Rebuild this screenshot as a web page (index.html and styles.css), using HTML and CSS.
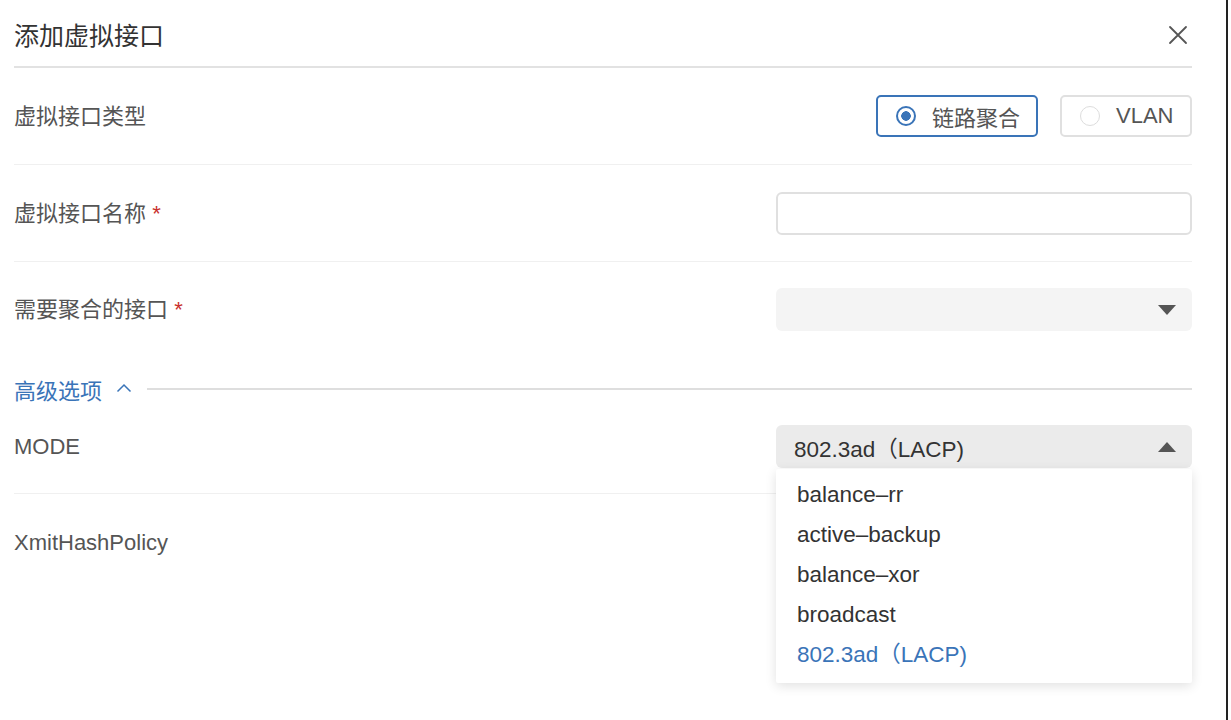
FILE: index.html
```html
<!DOCTYPE html>
<html lang="zh-CN">
<head>
<meta charset="utf-8">
<title>添加虚拟接口</title>
<link rel="stylesheet" href="styles.css">
</head>
<body>
<div class="frame">
  <div class="dialog">
    <div class="header">
      <h1 class="title">添加虚拟接口</h1>
      <button class="close" aria-label="关闭">
        <svg width="20" height="20" viewBox="0 0 20 20"><path d="M2 2 L18 18 M18 2 L2 18" stroke="#555" stroke-width="1.8" fill="none" stroke-linecap="round"/></svg>
      </button>
    </div>

    <div class="row">
      <div class="label">虚拟接口类型</div>
      <div class="radios">
        <label class="radio checked"><span class="dot"></span><span>链路聚合</span></label>
        <label class="radio vlan"><span class="dot"></span><span>VLAN</span></label>
      </div>
    </div>

    <div class="row">
      <div class="label">虚拟接口名称 <span class="req">*</span></div>
      <div class="control"><div class="input"></div></div>
    </div>

    <div class="row last">
      <div class="label high">需要聚合的接口 <span class="req">*</span></div>
      <div class="control raise">
        <div class="select">
          <span class="value"></span>
          <svg class="caret" width="18" height="10" viewBox="0 0 18 10"><path d="M0 0 H18 L9 10 Z" fill="#555"/></svg>
        </div>
      </div>
    </div>

    <div class="adv">
      <span class="adv-title">高级选项</span>
      <svg class="chev" width="16" height="10" viewBox="0 0 16 10"><path d="M1.5 8.5 L8 2 L14.5 8.5" stroke="#3a74b8" stroke-width="1.5" fill="none"/></svg>
      <span class="adv-line"></span>
    </div>

    <div class="row mode">
      <div class="label">MODE</div>
      <div class="control">
        <div class="select open">
          <span class="value">802.3ad（LACP)</span>
          <svg class="caret" width="18" height="10" viewBox="0 0 18 10"><path d="M0 10 H18 L9 0 Z" fill="#555"/></svg>
        </div>
        <ul class="menu">
          <li>balance–rr</li>
          <li>active–backup</li>
          <li>balance–xor</li>
          <li>broadcast</li>
          <li class="selected">802.3ad（LACP)</li>
        </ul>
      </div>
    </div>

    <div class="row last">
      <div class="label flat">XmitHashPolicy</div>
      <div class="control"></div>
    </div>
  </div>
</div>
</body>
</html>
```

FILE: styles.css
```css
* { box-sizing: border-box; }
html, body { margin: 0; padding: 0; background: #fff; }
body {
  font-family: "Liberation Sans", "Noto Sans CJK SC", sans-serif;
  color: #333;
}
.frame {
  width: 1228px;
  height: 720px;
  border-right: 2px solid #222;
  overflow: hidden;
}
.dialog {
  padding: 0 34px 0 14px;
}
.header {
  height: 68px;
  display: flex;
  align-items: center;
  justify-content: space-between;
  border-bottom: 2px solid #e2e2e2;
}
.title {
  margin: 0;
  font-size: 25px;
  font-weight: normal;
  color: #333;
  position: relative;
  top: 1px;
}
.close {
  border: 0;
  background: none;
  padding: 0;
  margin-right: 4px;
  width: 20px;
  height: 20px;
  position: relative;
  top: 2px;
}
.row {
  height: 97px;
  display: flex;
  align-items: center;
  justify-content: space-between;
  border-bottom: 1px solid #f0f0f0;
}
.row.last { border-bottom: 0; }
.label {
  font-size: 22px;
  color: #555;
  padding-bottom: 4px;
}
.label.high { padding-bottom: 8px; }
.label.flat { padding-bottom: 0; }
.req { color: #c9302c; }
.control {
  width: 416px;
  position: relative;
}
.control.raise { top: -1px; }
.radios {
  display: flex;
  gap: 22px;
}
.radio {
  height: 42px;
  width: 162px;
  display: flex;
  align-items: center;
  gap: 16px;
  padding-left: 18px;
  border: 2px solid #e0e0e0;
  border-radius: 5px;
  font-size: 22px;
  color: #555;
}
.radio.vlan { width: 132px; }
.radio.checked { border-color: #3a74b8; }
.dot {
  width: 20px;
  height: 20px;
  border-radius: 50%;
  border: 1.5px solid #ddd;
  background: #fff;
}
.radio.checked .dot {
  border: 2px solid #3a74b8;
  background: radial-gradient(circle, #3a74b8 0 4.5px, #fff 5px);
}
.input {
  height: 43px;
  border: 2px solid #e0e0e0;
  border-radius: 6px;
  background: #fff;
}
.select {
  height: 43px;
  border-radius: 6px;
  background: #f4f4f4;
  display: flex;
  align-items: center;
  justify-content: space-between;
  padding: 0 16px 0 18px;
  font-size: 22.5px;
  color: #333;
}
.select.open { background: #ebebeb; }
.adv {
  height: 60px;
  display: flex;
  align-items: center;
}
.adv-title {
  font-size: 22px;
  color: #3a74b8;
}
.chev { margin-left: 14px; position: relative; top: -1px; }
.adv-line {
  flex: 1;
  height: 2px;
  background: #dedede;
  margin-left: 15px;
}
.row.mode {
  height: 75px;
  align-items: flex-start;
  padding-top: 6px;
}
.row.mode .label {
  line-height: 43px;
  padding-bottom: 0;
}
.menu {
  position: absolute;
  left: 0;
  right: 0;
  top: 44px;
  margin: 0;
  padding: 6px 0 8px;
  list-style: none;
  background: #fff;
  box-shadow: 0 3px 12px rgba(0, 0, 0, 0.12);
  border-radius: 2px;
  z-index: 2;
}
.menu li {
  height: 40px;
  line-height: 40px;
  padding-left: 21px;
  font-size: 22.5px;
  color: #333;
}
.menu li.selected { color: #3a74b8; }
```
